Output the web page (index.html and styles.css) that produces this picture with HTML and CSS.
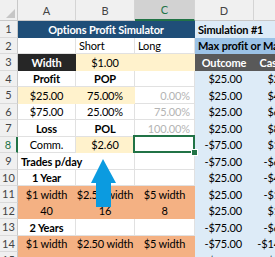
FILE: index.html
```html
<!DOCTYPE html>
<html lang="en">
<head>
<meta charset="UTF-8">
<title>Options Profit Simulator</title>
<link rel="stylesheet" href="styles.css">
</head>
<body>

<div class="sheet">

<div class="corner"><span class="tri"></span></div>
<div class="colhead">A</div>
<div class="colhead">B</div>
<div class="colhead active">C</div>
<div class="colhead">D</div>
<div class="colhead">E</div>

<div class="rowhead">1</div>
<div class="cell title span3">Options Profit Simulator</div>
<div class="cell lblue b left span2">Simulation #1</div>

<div class="rowhead">2</div>
<div class="cell"></div>
<div class="cell left">Short</div>
<div class="cell left">Long</div>
<div class="cell mblue b left span2">Max profit or Max loss</div>

<div class="rowhead">3</div>
<div class="cell black b">Width</div>
<div class="cell yel">$1.00</div>
<div class="cell yel"></div>
<div class="cell dgray b">Outcome</div>
<div class="cell dgray b">Cash flow</div>

<div class="rowhead">4</div>
<div class="cell b">Profit</div>
<div class="cell b">POP</div>
<div class="cell"></div>
<div class="cell lblue num">$25.00</div>
<div class="cell lblue num">$25.00</div>

<div class="rowhead">5</div>
<div class="cell yel">$25.00</div>
<div class="cell yel">75.00%</div>
<div class="cell grey">0.00%</div>
<div class="cell lblue num">$25.00</div>
<div class="cell lblue num">$45.00</div>

<div class="rowhead">6</div>
<div class="cell">$75.00</div>
<div class="cell">25.00%</div>
<div class="cell grey">75.00%</div>
<div class="cell lblue num">$25.00</div>
<div class="cell lblue num">$65.00</div>

<div class="rowhead">7</div>
<div class="cell b">Loss</div>
<div class="cell b">POL</div>
<div class="cell grey">100.00%</div>
<div class="cell lblue num">$25.00</div>
<div class="cell lblue num">$85.00</div>

<div class="rowhead current">8</div>
<div class="cell">Comm.</div>
<div class="cell yel">$2.60</div>
<div class="cell selected"><span class="handle"></span></div>
<div class="cell lblue num">-$75.00</div>
<div class="cell lblue num">$10.00</div>

<div class="rowhead">9</div>
<div class="cell b left span2">Trades p/day</div>
<div class="cell"></div>
<div class="cell lblue num">-$75.00</div>
<div class="cell lblue num">-$65.00</div>

<div class="rowhead">10</div>
<div class="cell b">1 Year</div>
<div class="cell"></div>
<div class="cell"></div>
<div class="cell lblue num">$25.00</div>
<div class="cell lblue num">-$40.00</div>

<div class="rowhead">11</div>
<div class="cell salmon">$1 width</div>
<div class="cell salmon">$2.50 width</div>
<div class="cell salmon">$5 width</div>
<div class="cell lblue num">$25.00</div>
<div class="cell lblue num">-$15.00</div>

<div class="rowhead">12</div>
<div class="cell salmon">40</div>
<div class="cell salmon">16</div>
<div class="cell salmon">8</div>
<div class="cell lblue num">$25.00</div>
<div class="cell lblue num">$10.00</div>

<div class="rowhead">13</div>
<div class="cell b">2 Years</div>
<div class="cell"></div>
<div class="cell"></div>
<div class="cell lblue num">-$75.00</div>
<div class="cell lblue num">-$65.00</div>

<div class="rowhead">14</div>
<div class="cell salmon">$1 width</div>
<div class="cell salmon">$2.50 width</div>
<div class="cell salmon">$5 width</div>
<div class="cell lblue num">-$75.00</div>
<div class="cell lblue num">-$140.00</div>

<div class="rowhead">15</div>
<div class="cell salmon">20</div>
<div class="cell salmon">8</div>
<div class="cell salmon">4</div>
<div class="cell lblue num">$25.00</div>
<div class="cell lblue num">$10.00</div>

<svg class="arrow" width="28" height="50" viewBox="0 0 28 50">
<path d="M13 1 L26 25 H21 V49 H6 V25 H1 Z" fill="#0b9be0"/>
</svg>

</div>

</body>
</html>
```

FILE: styles.css
```css
body{
margin:0;
font-family:Lato, "Liberation Sans", sans-serif;
font-size:11px;
letter-spacing:-0.15px;
color:#000;
background:white;
overflow:hidden;
}

.sheet{
position:relative;
display:grid;
grid-template-columns:18px 58px 59px 60px 59px 59px;
grid-template-rows:21px repeat(15,16.5px);
width:313px;
}

.corner{
background:#f0f0f0;
border-right:1px solid #c8c8c8;
border-bottom:1px solid #c8c8c8;
display:flex;
justify-content:flex-end;
align-items:flex-end;
padding:0 2px 2px 0;
box-sizing:border-box;
}

.tri{
width:0;
height:0;
border-left:9px solid transparent;
border-bottom:9px solid #c6c6c6;
}

.colhead{
background:#f0f0f0;
color:#444;
border-right:1px solid #d4d4d4;
border-bottom:1px solid #c8c8c8;
display:flex;
justify-content:center;
align-items:center;
box-sizing:border-box;
letter-spacing:0;
}

.colhead.active{
background:#d2d2d2;
color:#217346;
border-bottom:2px solid #217346;
}

.rowhead{
background:#f0f0f0;
color:#444;
border-right:1px solid #c8c8c8;
border-bottom:1px solid #dadada;
display:flex;
justify-content:center;
align-items:center;
box-sizing:border-box;
letter-spacing:0;
}

.rowhead.current{
color:#217346;
border-right:2px solid #217346;
}

.cell{
border-right:1px solid #e1e1e1;
border-bottom:1px solid #e1e1e1;
display:flex;
justify-content:center;
align-items:center;
white-space:nowrap;
overflow:hidden;
padding:1px 3px 0;
box-sizing:border-box;
}

.span2{grid-column:span 2;}
.span3{grid-column:span 3;}

.b{font-weight:bold;}
.left{justify-content:flex-start;}

.num{
justify-content:flex-end;
padding-right:11px;
}

.grey{
justify-content:flex-end;
color:#b4b4b4;
padding-right:4px;
}

.title{
background:#1f4e78;
border-color:#1f4e78;
color:white;
font-weight:bold;
}

.lblue{
background:#ddebf7;
border-color:#ddebf7;
}

.mblue{
background:#9bc2e6;
border-color:#9bc2e6;
}

.black{
background:#262626;
border-color:#262626;
color:white;
}

.dgray{
background:#595959;
border-color:#595959;
color:white;
}

.yel{
background:#fff2cc;
border-color:#fff2cc;
}

.salmon{
background:#f4b183;
border-color:#f4b183;
}

.selected{
position:relative;
overflow:visible;
}

.selected::before{
content:"";
position:absolute;
left:-2px;
top:-2px;
right:-1px;
bottom:-1px;
border:2px solid #217346;
}

.handle{
position:absolute;
right:-4px;
bottom:-4px;
width:5px;
height:5px;
background:#217346;
border:1px solid white;
z-index:2;
}

.arrow{
position:absolute;
left:90px;
top:158px;
}
```
